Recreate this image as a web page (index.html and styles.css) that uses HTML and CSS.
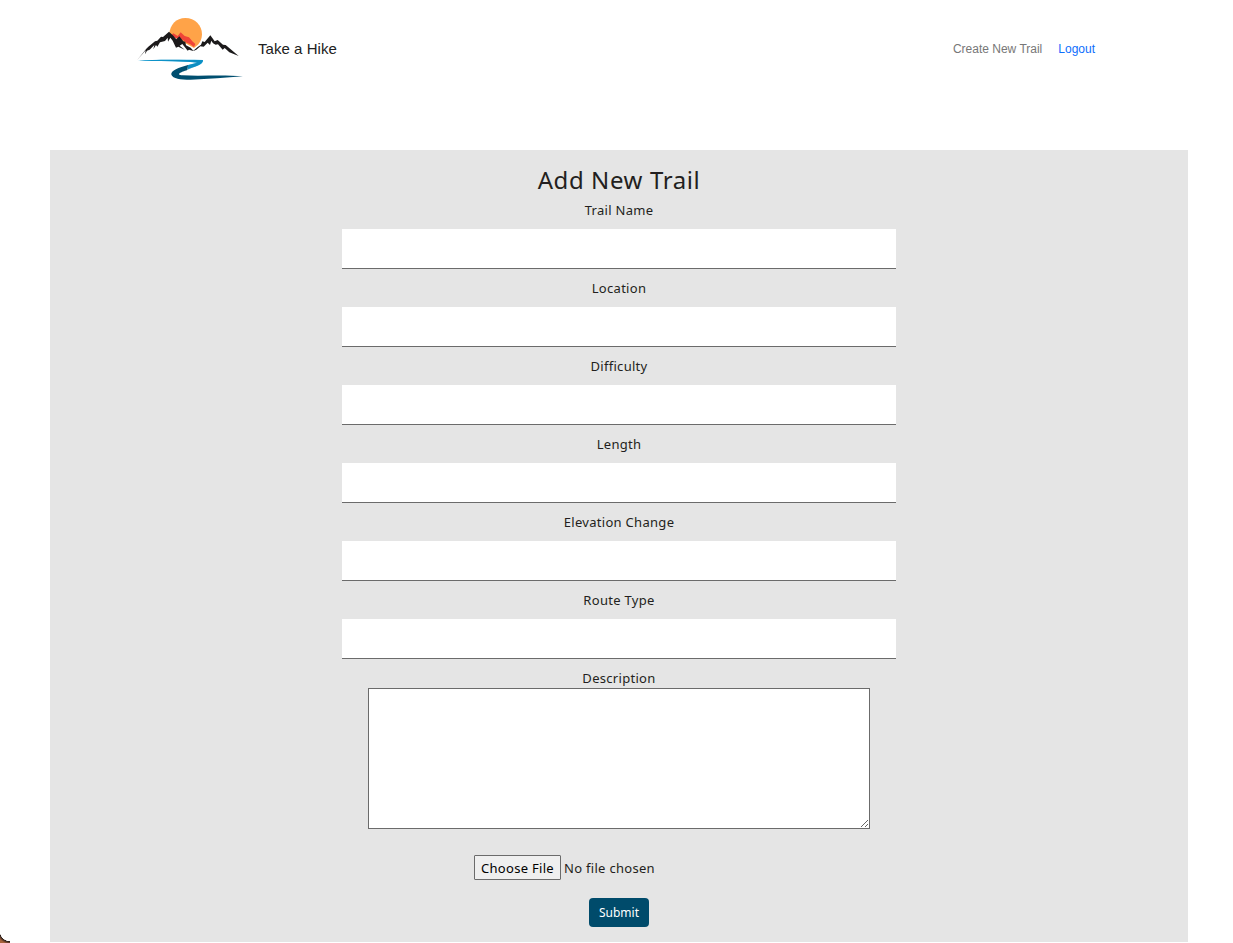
FILE: index.html
```html
<!DOCTYPE html>
<html lang="en">
<head>
<meta charset="utf-8">
<title>Take a Hike</title>
<link rel="stylesheet" href="styles.css">
</head>
<body>
<header class="navbar">
  <a class="brand" href="#">
    <svg class="logo" viewBox="0 0 360 240" aria-hidden="true">
      <path fill="#ffa348" d="M118 73C119 44 139 24 166 24C195 24 216 46 216 73C216 85 211 96 204 104L192 114L118 73Z"/>
      <path fill="#f04438" d="M122 77L130 70L143 78L152 67L164 78L177 82L187 94L196 102L192 111L181 103L170 98L154 87L147 81L143 87Z"/>
      <path fill="#1c1a1b" d="M21 151L49 116L55 110L75 94L82 92L93 80L99 81L117 65L130 77L139 88L148 79L160 94L166 95L168 106L182 113L190 122L203 111L213 104L217 94L224 96L241 76L254 94L263 90L279 104L287 105L326 138L298 127L284 114L278 119L264 103L257 104L249 100L244 92L240 105L233 98L221 110L211 109L199 119L190 123L177 119L173 122L157 102L149 107L164 119L145 110L138 113L128 92L121 83L114 95L113 83L105 93L90 97L82 110L78 105L70 118L73 105L59 119L51 122L45 133L47 121Z"/>
      <path fill="#119fda" d="M24 153C70 148 140 150 219 150C220 162 207 167 174 177L172 166L201 158C150 153 84 153 24 153Z"/>
      <path fill="#087eaa" d="M24 153C85 152 155 152 201 158L174 165L172 180C194 170 218 164 219 151C150 149 70 148 24 153Z" opacity=".5"/>
      <path fill="#004f70" d="M174 165C147 172 121 182 124 194C129 206 150 209 182 209C236 208 286 202 339 199C280 194 211 199 158 196C135 194 153 186 172 180Z"/>
    </svg>
    <span class="brand-name">Take a Hike</span>
  </a>
  <nav class="links">
    <a class="link" href="#">Create New Trail</a>
    <a class="link link-active" href="#">Logout</a>
  </nav>
</header>
<main class="panel">
  <h1 class="title">Add New Trail</h1>
  <form class="form">
    <label class="label" for="name">Trail Name</label>
    <input class="field" id="name" type="text">
    <label class="label" for="location">Location</label>
    <input class="field" id="location" type="text">
    <label class="label" for="difficulty">Difficulty</label>
    <input class="field" id="difficulty" type="text">
    <label class="label" for="length">Length</label>
    <input class="field" id="length" type="text">
    <label class="label" for="elevation">Elevation Change</label>
    <input class="field" id="elevation" type="text">
    <label class="label" for="route">Route Type</label>
    <input class="field" id="route" type="text">
    <label class="label label-tight" for="description">Description</label>
    <textarea class="description" id="description"></textarea>
    <div class="file-row">
      <button class="choose" type="button">Choose File</button>
      <span class="file-name">No file chosen</span>
    </div>
    <button class="submit" type="submit">Submit</button>
  </form>
</main>
<div class="corner"></div>
</body>
</html>
```

FILE: styles.css
```css
* { box-sizing: border-box; }
html { overflow: hidden; }
body {
  margin: 0;
  height: 943px;
  background: #fff;
  color: #231f20;
  font-family: "Noto Sans", "Open Sans", sans-serif;
}
.navbar {
  display: flex;
  justify-content: space-between;
  align-items: center;
  height: 98px;
  padding: 0 138px 0 130px;
  font-family: "Liberation Sans", Arial, sans-serif;
}
.brand {
  display: flex;
  align-items: center;
  gap: 8px;
  color: #212121;
  text-decoration: none;
}
.logo { width: 120px; height: 80px; margin-top: 2px; }
.brand-name { font-size: 15px; line-height: 20px; letter-spacing: 0.05px; }
.links { display: flex; gap: 16px; font-size: 12px; line-height: 18px; }
.link { color: #777; text-decoration: none; }
.link-active { color: #0d6efd; }
.panel {
  width: 1138px;
  height: 792px;
  margin: 52px 0 0 50px;
  padding-top: 14px;
  background: #e5e5e5;
}
.title {
  margin: 0 0 5px;
  font-size: 24px;
  font-weight: 400;
  line-height: 32px;
  letter-spacing: 0.6px;
  text-align: center;
}
.form { display: flex; flex-direction: column; align-items: center; }
.label {
  margin-bottom: 10px;
  font-size: 13px;
  line-height: 18px;
  letter-spacing: 0.3px;
}
.label-tight { margin-bottom: 1px; }
.field {
  width: 554px;
  height: 40px;
  margin: 0 0 10px;
  border: 0;
  border-bottom: 1px solid #6b6b6b;
  border-radius: 0;
  background: #fff;
}
.description {
  display: block;
  width: 502px;
  height: 141px;
  border: 1px solid #6b6b6b;
  border-radius: 0;
  background: #fff;
  resize: both;
}
.file-row {
  display: flex;
  align-items: center;
  gap: 3px;
  width: 290px;
  margin: 26px 0 18px;
  font-size: 13px;
  line-height: 18px;
  letter-spacing: 0.3px;
}
.choose {
  width: 87px;
  height: 25px;
  padding: 0;
  border: 1px solid #6b6b6b;
  border-radius: 1px;
  background: #efefef;
  color: #000;
  font: inherit;
  letter-spacing: inherit;
}
.submit {
  width: 60px;
  height: 29px;
  padding: 0;
  border: 0;
  border-radius: 4px;
  background: #004b6b;
  color: #fff;
  font: 12px/18px "Noto Sans", sans-serif;
}
.corner {
  position: fixed;
  left: 0;
  bottom: 0;
  width: 10px;
  height: 12px;
  background: radial-gradient(circle at 100% 0, transparent 10px, #2b211d 10.5px, #a7633c 13px);
}
```
